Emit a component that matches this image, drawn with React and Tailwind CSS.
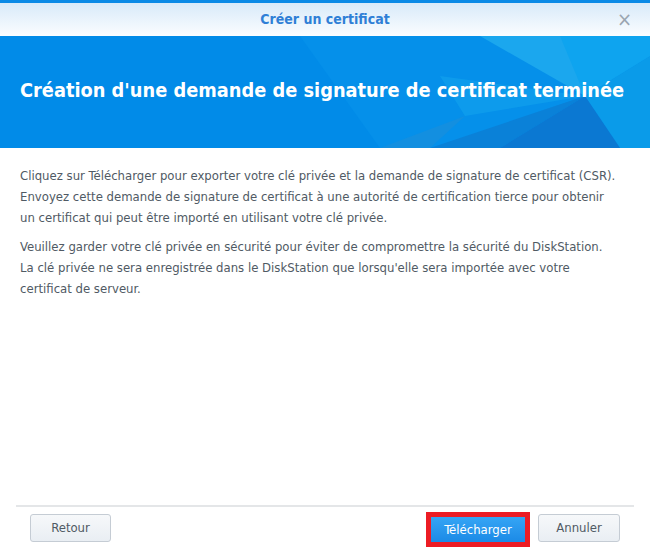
export default function App() {
  const font = { fontFamily: '"DejaVu Sans Condensed", "Liberation Sans", sans-serif' };

  return (
    <div className="w-[650px] h-[550px] flex flex-col bg-white overflow-hidden" style={font}>
      {/* title bar */}
      <div className="h-[36px] border-t-[3px] border-[#0a8ae6] bg-gradient-to-b from-[#d8eaf9] to-[#fbfdff] flex items-center justify-center relative">
        <span className="text-[14px] font-bold text-[#2f7fd6]">Créer un certificat</span>
        <span className="absolute right-[18px] top-[6px] text-[#9aa5b0] text-[20px] leading-none">×</span>
      </div>

      {/* banner */}
      <div className="h-[112px] bg-[#018be8] relative flex items-center px-[20px] overflow-hidden">
        <svg className="absolute inset-0" width="650" height="112" viewBox="0 0 650 112">
          <polygon points="300,0 380,112 650,112 650,0" fill="#0590ea" />
          <polygon points="480,0 585,60 650,20 650,0" fill="#1ba7ee" />
          <polygon points="585,60 650,20 650,112 620,112" fill="#0a9be9" />
          <polygon points="430,112 585,60 500,112" fill="#0a81d8" />
          <polygon points="500,112 585,60 620,112" fill="#0b78d2" />
          <polygon points="380,112 465,80 430,112" fill="#138fe0" />
          <polygon points="440,40 585,60 465,80" fill="#12a3ec" opacity="0.6" />
          <polygon points="560,0 650,0 650,20 585,60" fill="#08a3f0" opacity="0.7" />
        </svg>
        <h1 className="relative text-white text-[19.8px] font-bold pb-[3px] whitespace-nowrap">
          Création d'une demande de signature de certificat terminée
        </h1>
      </div>

      {/* content */}
      <div className="flex-1 px-[20px] pt-[17px] text-[13px] leading-[21px] text-[#505a64] whitespace-nowrap">
        <p>
          Cliquez sur Télécharger pour exporter votre clé privée et la demande de signature de certificat (CSR).
          <br />
          Envoyez cette demande de signature de certificat à une autorité de certification tierce pour obtenir
          <br />
          un certificat qui peut être importé en utilisant votre clé privée.
        </p>
        <p className="mt-[8px]">
          Veuillez garder votre clé privée en sécurité pour éviter de compromettre la sécurité du DiskStation.
          <br />
          La clé privée ne sera enregistrée dans le DiskStation que lorsqu'elle sera importée avec votre
          <br />
          certificat de serveur.
        </p>
      </div>

      {/* footer */}
      <div className="mx-[16px] border-t-2 border-[#e4e6e8]" />
      <div className="h-[43px] flex items-start pt-[7px] px-[30px]">
        <button className="w-[81px] h-[28px] rounded-[3px] border border-[#c5ccd4] bg-gradient-to-b from-[#f6f8fa] to-[#e9eef3] text-[13px] text-[#505a64]">
          Retour
        </button>
        <div className="ml-auto mr-[8px] -mt-[2px] border-[5px] border-[#ec1c24]">
          <button className="w-[94px] h-[25px] bg-gradient-to-b from-[#35a5f5] to-[#1b8ae6] text-[13px] text-white block">
            Télécharger
          </button>
        </div>
        <button className="w-[82px] h-[28px] rounded-[3px] border border-[#c5ccd4] bg-gradient-to-b from-[#f6f8fa] to-[#e9eef3] text-[13px] text-[#505a64]">
          Annuler
        </button>
      </div>
    </div>
  );
}
